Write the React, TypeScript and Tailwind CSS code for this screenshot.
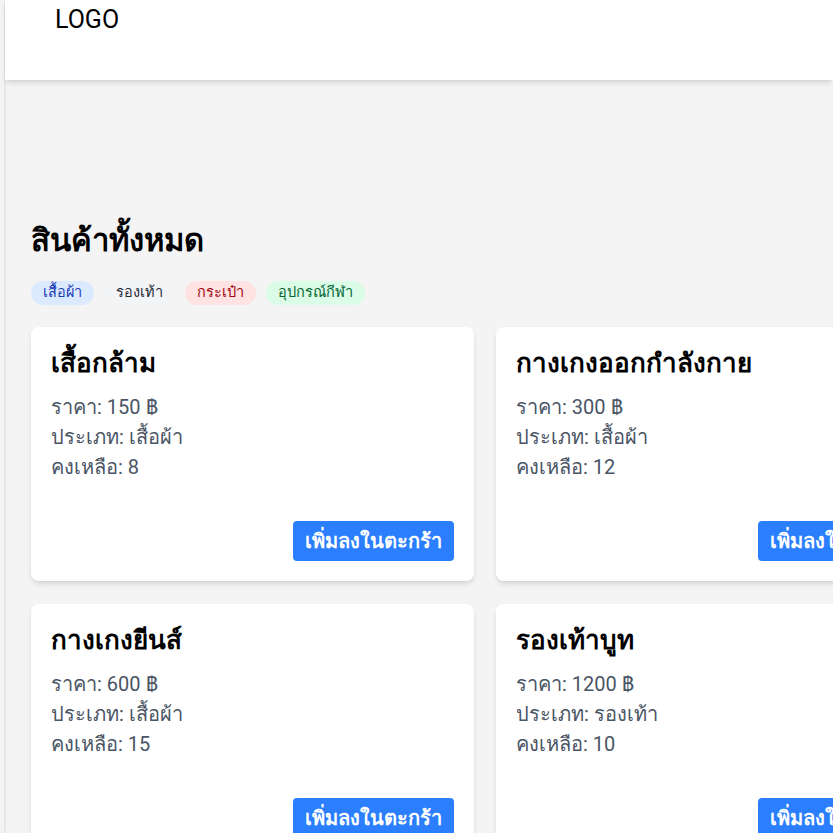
import React from 'react';

interface Product {
    name: string;
    price: number;
    category: string;
    stock: number;
}

const products: Product[] = [
    { name: 'เสื้อกล้าม', price: 150, category: 'เสื้อผ้า', stock: 8 },
    { name: 'กางเกงออกกำลังกาย', price: 300, category: 'เสื้อผ้า', stock: 12 },
    { name: 'กระเป๋าสะพาย', price: 450, category: 'กระเป๋า', stock: 6 },
    { name: 'กางเกงยีนส์', price: 600, category: 'เสื้อผ้า', stock: 15 },
    { name: 'รองเท้าบูท', price: 1200, category: 'รองเท้า', stock: 10 },
    { name: 'ลูกฟุตบอล', price: 500, category: 'อุปกรณ์กีฬา', stock: 20 },
];

const tags = [
    { label: 'เสื้อผ้า', cls: 'bg-blue-100 text-blue-800' },
    { label: 'รองเท้า', cls: 'bg-gray-100 text-gray-800' },
    { label: 'กระเป๋า', cls: 'bg-red-100 text-red-800' },
    { label: 'อุปกรณ์กีฬา', cls: 'bg-green-100 text-green-800' },
];

const ProductCard: React.FC<{ product: Product }> = ({ product }) => (
    <div className="bg-white rounded-lg shadow-md p-5 h-[254px] flex flex-col">
        <h3 className="text-[26px] font-bold text-black leading-8 mb-[13px]">{product.name}</h3>
        <p className="text-xl text-gray-600 leading-[30px]">ราคา: {product.price} ฿</p>
        <p className="text-xl text-gray-600 leading-[30px]">ประเภท: {product.category}</p>
        <p className="text-xl text-gray-600 leading-[30px]">คงเหลือ: {product.stock}</p>
        <div className="mt-auto flex justify-end">
            <button className="bg-blue-500 text-white font-bold text-xl leading-7 px-3 py-1.5 rounded">
                เพิ่มลงในตะกร้า
            </button>
        </div>
    </div>
);

export default function App() {
    return (
        <div className="w-screen h-screen overflow-hidden flex bg-[#f4f4f4] font-['Roboto',sans-serif]">
            <div className="w-[5px] shrink-0 bg-[#f3f3f3] border-r border-[#e4e4e4] shadow-sm" />
            <div className="flex-1 min-w-0">
                <header className="bg-white h-20 shadow-md px-[50px] pt-[4px]">
                    <span className="text-[25px] leading-8 text-black">LOGO</span>
                </header>
                <main className="px-[26px] pt-[143px]">
                    <h1 className="text-[31px] font-bold text-black leading-9 mb-[22px]">สินค้าทั้งหมด</h1>
                    <div className="flex gap-2.5 mb-[22px]">
                        {tags.map((t) => (
                            <span key={t.label} className={`rounded-full px-3 py-0.5 text-[14.5px] leading-5 ${t.cls}`}>
                                {t.label}
                            </span>
                        ))}
                    </div>
                    <div className="grid grid-cols-[repeat(3,443px)] gap-x-[22px] gap-y-[23px]">
                        {products.map((p) => (
                            <ProductCard key={p.name} product={p} />
                        ))}
                    </div>
                </main>
            </div>
        </div>
    );
}
